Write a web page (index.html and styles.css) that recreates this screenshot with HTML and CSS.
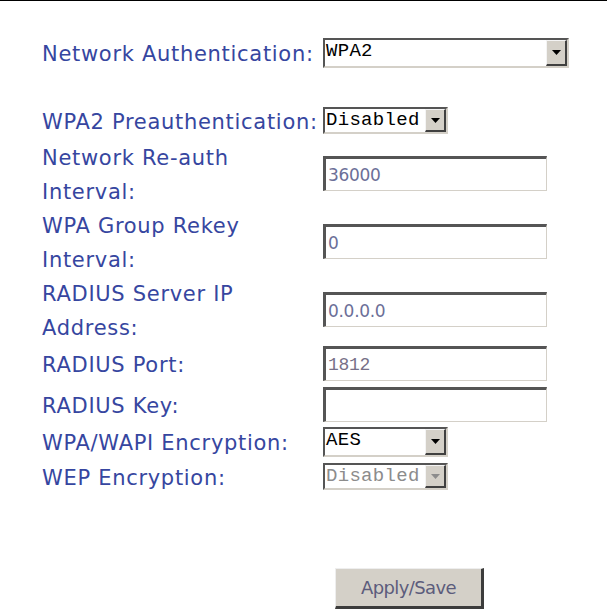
FILE: index.html
```html
<!DOCTYPE html>
<html lang="en">
<head>
    <meta charset="UTF-8">
    <title>Wireless Security</title>
    <link rel="stylesheet" href="styles.css">
</head>
<body>
    <div class="page">
        <div class="form">
            <div class="row r-short">
                <span class="label">Network Authentication:</span>
                <div class="select wide tall">
                    <span class="value">WPA2</span>
                    <span class="arrow"><svg width="9" height="5" viewBox="0 0 9 5"><path d="M0 0H9L4.5 5Z"/></svg></span>
                </div>
            </div>
            <div class="spacer"></div>
            <div class="row r-pre">
                <span class="label">WPA2 Preauthentication:</span>
                <div class="select">
                    <span class="value">Disabled</span>
                    <span class="arrow"><svg width="9" height="5" viewBox="0 0 9 5"><path d="M0 0H9L4.5 5Z"/></svg></span>
                </div>
            </div>
            <div class="row r-double">
                <span class="label">Network Re-auth<br>Interval:</span>
                <input class="text" type="text" value="36000">
            </div>
            <div class="row r-double">
                <span class="label">WPA Group Rekey<br>Interval:</span>
                <input class="text" type="text" value="0">
            </div>
            <div class="row r-double">
                <span class="label">RADIUS Server IP<br>Address:</span>
                <input class="text" type="text" value="0.0.0.0">
            </div>
            <div class="row r-port">
                <span class="label">RADIUS Port:</span>
                <input class="text mono" type="text" value="1812">
            </div>
            <div class="row r-key">
                <span class="label">RADIUS Key:</span>
                <input class="text" type="password" value="">
            </div>
            <div class="row r-enc">
                <span class="label">WPA/WAPI Encryption:</span>
                <div class="select tall">
                    <span class="value">AES</span>
                    <span class="arrow"><svg width="9" height="5" viewBox="0 0 9 5"><path d="M0 0H9L4.5 5Z"/></svg></span>
                </div>
            </div>
            <div class="row r-short">
                <span class="label">WEP Encryption:</span>
                <div class="select disabled">
                    <span class="value">Disabled</span>
                    <span class="arrow"><svg width="9" height="5" viewBox="0 0 9 5"><path d="M0 0H9L4.5 5Z"/></svg></span>
                </div>
            </div>
        </div>
        <div class="actions">
            <button type="button">Apply/Save</button>
        </div>
    </div>
</body>
</html>
```

FILE: styles.css
```css
body {
    margin: 0;
    background: #fff;
    font-family: "DejaVu Sans", Verdana, sans-serif;
}
.page {
    border-top: 1px solid #000;
    height: 615px;
}
.form {
    margin-top: 33px;
    padding-left: 42px;
}
.row {
    display: grid;
    grid-template-columns: 281px auto;
    align-items: center;
    justify-items: start;
    height: 34px;
}
.r-pre {
    height: 36px;
}
.r-double {
    height: 68px;
}
.r-port {
    height: 43px;
}
.r-key {
    height: 38px;
}
.r-enc {
    height: 35px;
}
.spacer {
    height: 34px;
}
.label {
    color: #3646a0;
    font-size: 21px;
    letter-spacing: 0.7px;
    line-height: 34px;
    padding-top: 3px;
    white-space: nowrap;
}
.select {
    display: flex;
    box-sizing: border-box;
    width: 125px;
    height: 27px;
    border-style: solid;
    border-width: 2px;
    border-color: #555 #d4d0c8 #d4d0c8 #555;
    background: #fff;
}
.select.wide {
    width: 246px;
}
.select.tall {
    height: 30px;
}
.select .value {
    flex: 1;
    font-family: "Liberation Mono", "Courier New", monospace;
    font-size: 19px;
    line-height: 23px;
    padding-left: 1px;
    color: #000;
    letter-spacing: 0.3px;
}
.select .arrow {
    display: flex;
    align-items: center;
    justify-content: center;
    width: 18px;
    background: #d4d0c8;
    border-style: solid;
    border-width: 1px 2px 2px 1px;
    border-color: #f4f4f4 #404040 #404040 #f4f4f4;
}
.select.disabled .value {
    color: #8c8c8c;
}
.select.disabled .arrow path {
    fill: #8c8c8c;
}
.text {
    box-sizing: border-box;
    width: 224px;
    height: 35px;
    margin: 0;
    padding: 0 2px;
    border-style: solid;
    border-width: 3px 1px 1px 3px;
    border-color: #555 #d4d0c8 #d4d0c8 #555;
    font-family: "DejaVu Sans", Verdana, sans-serif;
    font-size: 17px;
    letter-spacing: -0.3px;
    color: #6c6f98;
    outline: none;
}
.text.mono {
    font-family: "Liberation Mono", "Courier New", monospace;
    font-size: 18px;
    color: #777088;
}
.actions {
    padding-left: 335px;
    margin-top: 76px;
}
button {
    box-sizing: border-box;
    width: 149px;
    height: 41px;
    background: #d4d0c8;
    border-style: solid;
    border-width: 1px 3px 3px 1px;
    border-color: #eeeeee #3c3c3c #3c3c3c #eeeeee;
    font-family: "DejaVu Sans", Verdana, sans-serif;
    font-size: 18px;
    letter-spacing: -0.6px;
    color: #5c5c7c;
    padding: 0;
}
```
